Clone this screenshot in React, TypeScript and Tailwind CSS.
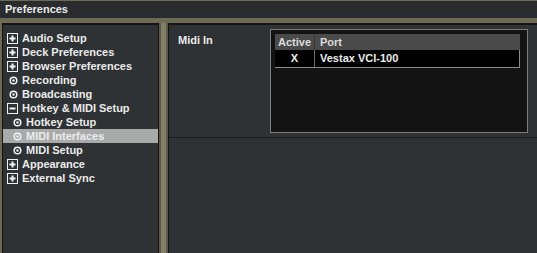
import React from "react";

type Item = { label: string; icon: "plus" | "minus" | "dot"; sub?: boolean; selected?: boolean };

const items: Item[] = [
  { label: "Audio Setup", icon: "plus" },
  { label: "Deck Preferences", icon: "plus" },
  { label: "Browser Preferences", icon: "plus" },
  { label: "Recording", icon: "dot" },
  { label: "Broadcasting", icon: "dot" },
  { label: "Hotkey & MIDI Setup", icon: "minus" },
  { label: "Hotkey Setup", icon: "dot", sub: true },
  { label: "MIDI Interfaces", icon: "dot", sub: true, selected: true },
  { label: "MIDI Setup", icon: "dot", sub: true },
  { label: "Appearance", icon: "plus" },
  { label: "External Sync", icon: "plus" },
];

function TreeIcon({ kind }: { kind: Item["icon"] }) {
  if (kind === "dot") {
    return (
      <svg width="9" height="9" viewBox="0 0 9 9" className="shrink-0">
        <circle cx="4.5" cy="4.5" r="3.3" fill="none" stroke="#f2f2f2" strokeWidth="1.5" />
        <circle cx="4.5" cy="4.5" r="1.2" fill="#f2f2f2" />
      </svg>
    );
  }
  return (
    <svg width="11" height="11" viewBox="0 0 11 11" className="shrink-0">
      <rect x="0.5" y="0.5" width="10" height="10" fill="none" stroke="#f2f2f2" />
      <rect x="2.5" y="4.5" width="6" height="2" fill="#f2f2f2" />
      {kind === "plus" && <rect x="4.5" y="2.5" width="2" height="6" fill="#f2f2f2" />}
    </svg>
  );
}

export default function App() {
  return (
    <div
      className="w-[537px] h-[253px] bg-[#6d6a55] flex flex-col overflow-hidden text-[11px] font-bold text-[#ebebeb]"
      style={{ fontFamily: '"Liberation Sans", Arial, sans-serif' }}
    >
      {/* title bar */}
      <div className="mt-px h-[17px] bg-[#2a2b2f] flex items-center pl-[5px] leading-none">Preferences</div>

      <div className="flex flex-1 pt-[5px] pl-[2px] min-h-0">
        {/* left tree */}
        <div className="w-[157px] bg-[#2e3234] border-t-2 border-l border-r border-[#141412] pt-[6px]">
          {items.map((it) => (
            <div
              key={it.label}
              className={`h-[14px] flex items-center gap-[4px] ${
                it.sub ? "pl-[10px]" : it.icon === "dot" ? "pl-[6px]" : "pl-[4px]"
              } ${it.selected ? "bg-[#a9abab]" : ""}`}
            >
              <TreeIcon kind={it.icon} />
              <span className="leading-[14px] whitespace-nowrap">{it.label}</span>
            </div>
          ))}
        </div>

        {/* divider */}
        <div className="w-[9px] bg-[#827e68] border-x-2 border-[#5d5a47]" />

        {/* right content */}
        <div className="flex-1 bg-[#2e3234] border-t-2 border-l border-[#141412] flex flex-col">
          <div className="flex pt-[4px] pl-[9px] pb-[4px] border-b border-[#1a1c1c]">
            <div className="w-[92px] pt-[4px] leading-[14px]">Midi In</div>
            <div className="w-[258px] h-[104px] border border-[#7c7c7c] bg-[#141314] pt-[4px] pl-[4px] pr-[7px]">
              <div className="flex h-[16px] bg-[#4b4a4b] text-[#dcdcdc] leading-[16px]">
                <div className="w-[40px] text-center border-r border-[#363536]">Active</div>
                <div className="pl-[5px]">Port</div>
              </div>
              <div className="flex h-[18px] bg-black border-r border-b border-[#8a8a8a] leading-[17px]">
                <div className="w-[40px] text-center border-r border-[#6a6a6a]">X</div>
                <div className="pl-[5px]">Vestax VCI-100</div>
              </div>
            </div>
          </div>
          <div className="flex-1" />
        </div>
      </div>
    </div>
  );
}
